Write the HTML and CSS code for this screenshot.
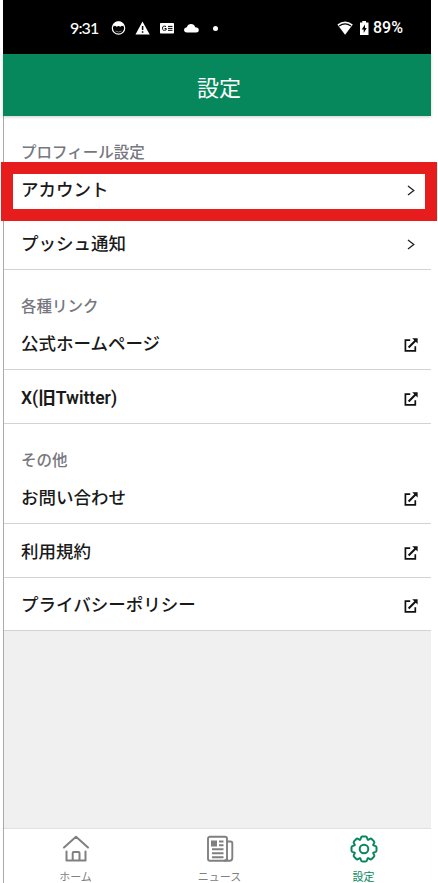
FILE: index.html
```html
<!DOCTYPE html>
<html lang="ja">
<head>
<meta charset="utf-8">
<title>設定</title>
<link rel="stylesheet" href="styles.css">
</head>
<body>
<svg class="defs" width="0" height="0">
  <symbol id="chevron" viewBox="0 0 8 11"><path d="M1 1l5.8 4.5L1 10" fill="none" stroke="#222" stroke-width="1.3"/></symbol>
  <symbol id="external" viewBox="0 0 14 14"><path d="M6.2 2.2H1.4V12.8H11.3V8.2" fill="none" stroke="#111" stroke-width="1.7"/><path d="M4.6 9.4L11.6 2.4" stroke="#111" stroke-width="2.1"/><path d="M8.2.3H13.6V5.5z" fill="#111"/></symbol>
  <path id="tooth" d="M9.4-3.9C9.9-2.7 12.5-3.6 12.5-1.7V1.7C12.5 3.6 9.9 2.7 9.4 3.9"/>
</svg>
<div class="phone">
  <div class="status">
    <span class="time">9:31</span>
    <svg class="notices" width="110" height="16" viewBox="0 0 110 16">
      <circle cx="7.5" cy="8" r="6.2" fill="none" stroke="#fff" stroke-width="1.2"/>
      <path d="M2 6.5Q3 1.5 7.5 1.5T13 6.5L10.8 5.8L9.5 6.8L7.5 6L5.5 6.8L4.2 5.8z" fill="#fff"/>
      <path d="M4.5 11Q7.5 13 10.5 11" fill="none" stroke="#999" stroke-width=".8"/>
      <path d="M31.5 1.5L38.7 14.5H24.5z" fill="#fff"/>
      <path d="M31.6 6V10M31.6 11.3V12.8" stroke="#000" stroke-width="1.5"/>
      <rect x="49" y="3" width="14" height="10.5" rx=".8" fill="#fff"/>
      <path d="M55 6.5Q51.5 5.2 51.5 8.3T55.2 9.8V8.5H53.6M57 6.4H61.5M57 8.4H61.5M57 10.3H61.5" fill="none" stroke="#000" stroke-width="1"/>
      <path d="M76 12.5Q73 12.2 73 9.7Q73.2 7.4 75.8 7.2Q77 4 80 4Q83.2 4 84.2 7.3Q87.6 7.5 87.8 10Q87.8 12.5 85 12.5z" fill="#fff"/>
      <circle cx="104.5" cy="8.500" r="2.500" fill="#fff"/>
    </svg>
    <svg class="power" width="33" height="16" viewBox="0 0 33 16">
      <path d="M.4 4.600Q8 -1.600 15.800 4.600L8.100 14.800z" fill="#fff"/>
      <path d="M2.200 6.100Q8 1.700 14 6.100" fill="none" stroke="#000" stroke-width="1.200"/>
      <path d="M23 2.500H25.300V1H29V2.500H31.500V15H23z" fill="#fff"/>
      <path d="M28 4.500L24.700 9.400H26.700V13L29.800 8.100H28z" fill="#000"/>
    </svg>
    <span class="percent">89%</span>
  </div>
  <header class="header">設定</header>
  <main class="content">
    <section class="group">
      <h2 class="label">プロフィール設定</h2>
      <a class="row highlighted">アカウント<svg class="chevron"><use href="#chevron"/></svg></a>
      <a class="row">プッシュ通知<svg class="chevron"><use href="#chevron"/></svg></a>
    </section>
    <section class="group">
      <h2 class="label">各種リンク</h2>
      <a class="row">公式ホームページ<svg class="external"><use href="#external"/></svg></a>
      <a class="row latin">X(旧Twitter)<svg class="external"><use href="#external"/></svg></a>
    </section>
    <section class="group">
      <h2 class="label">その他</h2>
      <a class="row">お問い合わせ<svg class="external"><use href="#external"/></svg></a>
      <a class="row">利用規約<svg class="external"><use href="#external"/></svg></a>
      <a class="row">プライバシーポリシー<svg class="external"><use href="#external"/></svg></a>
    </section>
  </main>
  <nav class="tabs">
    <a class="tab">
      <svg width="28" height="28" viewBox="0 0 28 28" fill="none" stroke="#808080" stroke-width="2" stroke-linecap="round" stroke-linejoin="round"><path d="M2 12.500L14 1.800L26 12.500M4.500 16.500V25.500H23.500V16.500M10.700 25.500V18Q10.700 17 11.700 17H16.500Q17.500 17 17.500 18V25.500"/></svg>
      <span>ホーム</span>
    </a>
    <a class="tab">
      <svg width="28" height="28" viewBox="0 0 28 28" fill="none" stroke="#808080" stroke-width="1.900" stroke-linejoin="round"><rect x="2" y="1.700" width="19" height="24" rx="2"/><path d="M21 6.500H24.500Q26.300 6.500 26.300 8.300V23Q26.300 25.700 23.600 25.700H18.500Q21 25.700 21 23M6 14.200H17.500M6 18.200H17.500M6 22.200H17.500M13 6.500H17.500M13 10.300H17.500"/><rect x="5" y="5.500" width="6" height="6" fill="#808080" stroke="none"/></svg>
      <span>ニュース</span>
    </a>
    <a class="tab active">
      <svg width="28" height="28" viewBox="-14 -14 28 28" fill="none" stroke="#07885c" stroke-width="2" stroke-linecap="round"><use href="#tooth"/><use href="#tooth" transform="rotate(45)"/><use href="#tooth" transform="rotate(90)"/><use href="#tooth" transform="rotate(135)"/><use href="#tooth" transform="rotate(180)"/><use href="#tooth" transform="rotate(225)"/><use href="#tooth" transform="rotate(270)"/><use href="#tooth" transform="rotate(315)"/><circle r="4.300"/></svg>
      <span>設定</span>
    </a>
  </nav>
</div>
</body>
</html>
```
FILE: styles.css
```css
*, *::after { box-sizing: border-box; }
body {
  margin: 0;
  background: #fff;
  font-family: "Noto Sans CJK JP", sans-serif;
}
.defs { position: absolute; }
.phone {
  width: 428px;
  height: 883px;
  margin-left: 3px;
  display: flex;
  flex-direction: column;
  background: #f0f0f0;
}
.status {
  height: 54px;
  flex: none;
  display: flex;
  align-items: center;
  padding: 2px 27px 0 67px;
  background: #000;
  color: #fff;
  font: 500 16px/20px Roboto, sans-serif;
}
.time { width: 41px; font-family: Lato, sans-serif; font-weight: 500; letter-spacing: -.9px; }
.power { margin-left: auto; margin-right: 3px; }
.percent { width: 31px; white-space: nowrap; }
.header {
  height: 62px;
  flex: none;
  background: #07885c;
  color: #fff;
  font-size: 22px;
  line-height: 64px;
  text-align: center;
  padding-left: 4px;
  box-shadow: 0 1px 3px rgba(0, 0, 0, .2);
  z-index: 1;
}
.content { flex: 1; border-left: 1px solid #aaa; }
.group { background: #fff; }
.label {
  margin: 0;
  height: 46px;
  padding: 23px 0 0 17px;
  color: #777780;
  font-size: 15.5px;
  font-weight: 500;
  line-height: 24px;
}
.row {
  position: relative;
  display: flex;
  align-items: center;
  justify-content: space-between;
  height: 54px;
  padding: 0 13.500px 1px 17px;
  border-bottom: 1px solid #d3d3d5;
  color: #1a1a1a;
  font-size: 17.500px;
  font-weight: 500;
}
.group:last-child .row:last-child { height: 53px; }
.latin { font-family: Roboto, "Noto Sans CJK JP", sans-serif; font-weight: 600; }
.chevron { width: 8px; height: 11px; margin: 4px 3px 0 0; }
.external { width: 14px; height: 14px; margin-top: 5px; }
.highlighted { border-bottom-color: transparent; }
.highlighted::after {
  content: "";
  position: absolute;
  z-index: 2;
  top: 0;
  left: -3px;
  width: 436px;
  height: 59px;
  border: 12px solid #e71d1d;
}
.tabs {
  height: 54px;
  flex: none;
  display: grid;
  grid-template-columns: 143px 145px 1fr;
  background: #fff;
  border-left: 1px solid #aaa;
  box-shadow: 0 -1px 1px rgba(0, 0, 0, .06);
}
.tab {
  display: flex;
  flex-direction: column;
  align-items: center;
  padding-top: 6px;
  color: #808080;
  font-size: 11px;
  line-height: 12px;
  gap: 7px;
}
.active { color: #07885c; padding-left: 4px; }
```
